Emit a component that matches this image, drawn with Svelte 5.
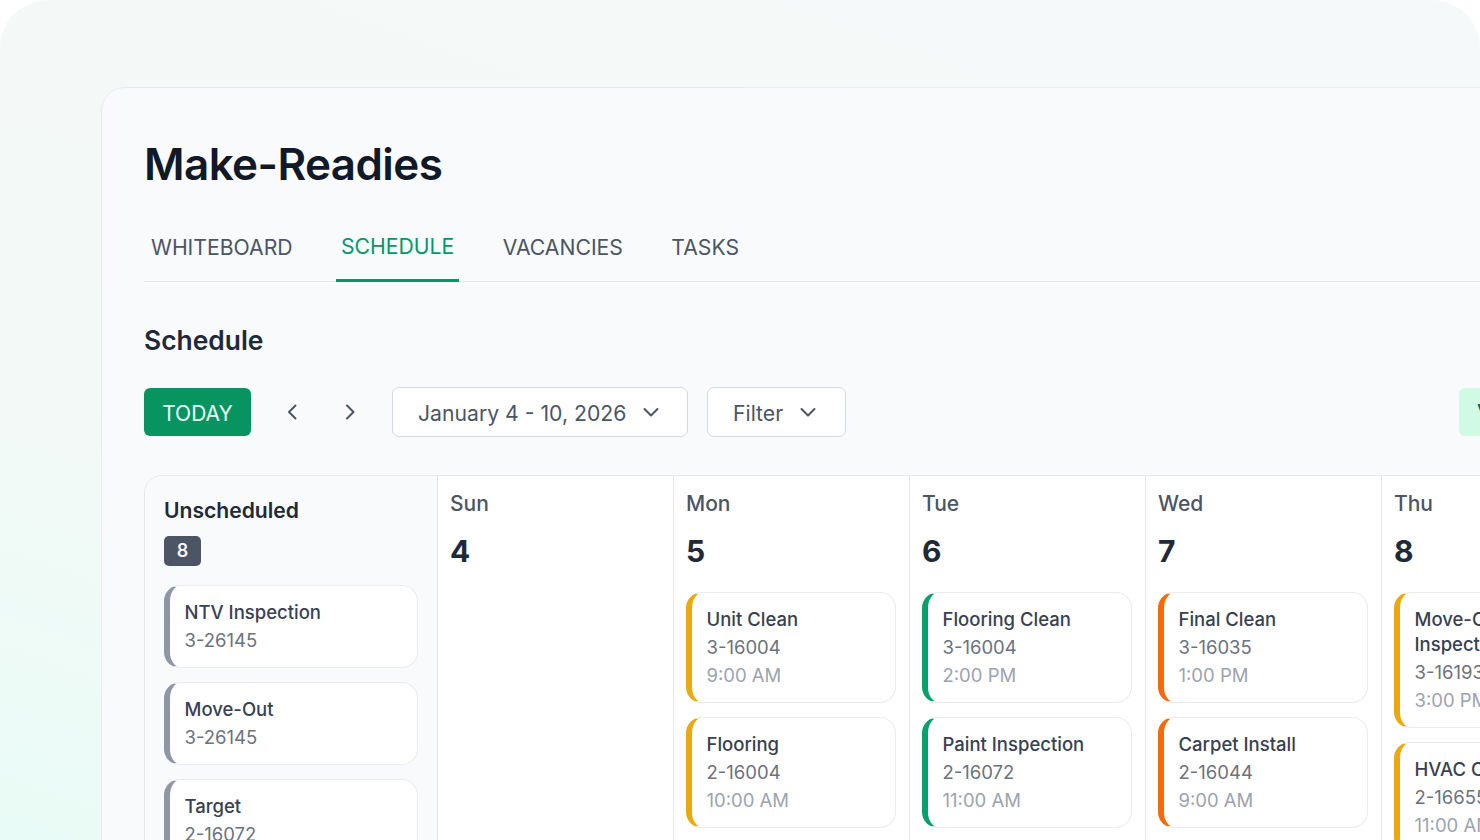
<script>
  const tabs = [
    { label: 'WHITEBOARD', active: false },
    { label: 'SCHEDULE', active: true },
    { label: 'VACANCIES', active: false },
    { label: 'TASKS', active: false }
  ];
  const unscheduled = [
    { title: 'NTV Inspection', unit: '3-26145' },
    { title: 'Move-Out', unit: '3-26145' },
    { title: 'Target', unit: '2-16072' }
  ];
  const days = [
    { name: 'Sun', num: 4, color: '', cards: [] },
    { name: 'Mon', num: 5, color: 'yellow', cards: [
      { title: 'Unit Clean', unit: '3-16004', time: '9:00 AM' },
      { title: 'Flooring', unit: '2-16004', time: '10:00 AM' }
    ] },
    { name: 'Tue', num: 6, color: 'green', cards: [
      { title: 'Flooring Clean', unit: '3-16004', time: '2:00 PM' },
      { title: 'Paint Inspection', unit: '2-16072', time: '11:00 AM' }
    ] },
    { name: 'Wed', num: 7, color: 'orange', cards: [
      { title: 'Final Clean', unit: '3-16035', time: '1:00 PM' },
      { title: 'Carpet Install', unit: '2-16044', time: '9:00 AM' }
    ] },
    { name: 'Thu', num: 8, color: 'yellow', cards: [
      { title: 'Move-Out Inspection', unit: '3-16193', time: '3:00 PM' },
      { title: 'HVAC Check', unit: '2-16655', time: '11:00 AM' }
    ] }
  ];
</script>

<div class="frame">
  <div class="panel">
    <h1>Make-Readies</h1>
    <div class="tabs">
      {#each tabs as t}
        <div class="tab" class:active={t.active}>{t.label}</div>
      {/each}
    </div>
    <h2>Schedule</h2>
    <div class="toolbar">
      <button class="today">TODAY</button>
      <button class="nav" aria-label="Previous">
        <svg width="20" height="20" viewBox="0 0 20 20"><path d="M13.5 3.5 7 10l6.5 6.5" /></svg>
      </button>
      <button class="nav" aria-label="Next">
        <svg width="20" height="20" viewBox="0 0 20 20"><path d="M7 3.5 13.5 10 7 16.5" /></svg>
      </button>
      <button class="select date">January 4 - 10, 2026
        <svg width="20" height="20" viewBox="0 0 20 20"><path d="M3.5 7 10 13.5 16.5 7" /></svg>
      </button>
      <button class="select filter">Filter
        <svg width="20" height="20" viewBox="0 0 20 20"><path d="M3.5 7 10 13.5 16.5 7" /></svg>
      </button>
      <div class="spacer"></div>
      <button class="view">View</button>
    </div>
    <div class="calendar">
      <div class="side">
        <div class="side-title">Unscheduled</div>
        <div class="badge">8</div>
        <div class="side-cards">
          {#each unscheduled as c}
            <div class="card grey">
              <div class="c-title">{c.title}</div>
              <div class="c-unit">{c.unit}</div>
            </div>
          {/each}
        </div>
      </div>
      {#each days as d}
        <div class="day">
          <div class="d-name">{d.name}</div>
          <div class="d-num">{d.num}</div>
          <div class="d-cards">
            {#each d.cards as c}
              <div class="card {d.color}">
                <div class="c-title">{c.title}</div>
                <div class="c-unit">{c.unit}</div>
                <div class="c-time">{c.time}</div>
              </div>
            {/each}
          </div>
        </div>
      {/each}
    </div>
  </div>
</div>

<style>
  :global(body) {
    margin: 0;
    background: #fff;
    font-family: Inter, "Liberation Sans", sans-serif;
  }
  .frame {
    width: 1480px;
    height: 840px;
    box-sizing: border-box;
    overflow: hidden;
    padding: 87px 0 0 101px;
    border-radius: 48px 48px 0 0;
    background: linear-gradient(20deg, #e9fbf6 0%, #f3f9f7 35%, #f6f9f9 100%);
  }
  .panel {
    width: 1700px;
    height: 900px;
    box-sizing: border-box;
    padding: 0 0 0 42px;
    background: #f8fafb;
    border: 1px solid #e7ebec;
    border-radius: 24px 0 0 0;
  }
  h1 {
    margin: 49px 0 0;
    font-size: 44px;
    line-height: 54px;
    font-weight: 600;
    letter-spacing: -0.6px;
    color: #111827;
  }
  .tabs {
    display: flex;
    margin-top: 25px;
    height: 66px;
    padding-left: 1px;
    box-sizing: border-box;
    border-bottom: 1px solid #e5e7eb;
  }
  .tab {
    padding: 0 6px;
    margin-right: 36.4px;
    font-size: 21.2px;
    line-height: 62px;
    color: #4b5563;
    font-weight: 400;
    height: 66px;
    box-sizing: border-box;
  }
  .tab.active {
    color: #059669;
    line-height: 60px;
    padding: 0 5px;
    margin-left: 1px;
    margin-right: 37.4px;
    border-bottom: 3px solid #059669;
    margin-bottom: -1px;
  }
  h2 {
    margin: 40px 0 0;
    font-size: 26.4px;
    line-height: 36px;
    font-weight: 600;
    color: #1f2937;
  }
  .toolbar {
    display: flex;
    align-items: center;
    margin-top: 29px;
    height: 50px;
    width: 1500px;
  }
  button {
    font-family: inherit;
    padding: 0;
    cursor: pointer;
    flex: none;
  }
  svg path {
    fill: none;
    stroke: #4b5563;
    stroke-width: 2;
    stroke-linecap: round;
    stroke-linejoin: round;
  }
  .today {
    width: 107px;
    height: 48px;
    border: 0;
    border-radius: 6px;
    padding-top: 2px;
    background: #089460;
    color: #ecfdf5;
    font-size: 21px;
  }
  .nav {
    width: 58px;
    height: 48px;
    border: 0;
    background: none;
    display: flex;
    align-items: center;
    justify-content: center;
  }
  .today + .nav { margin-left: 12px; }
  .select {
    height: 50px;
    background: #fff;
    border: 1px solid #d5d8de;
    border-radius: 7px;
    color: #4b5563;
    font-size: 21.2px;
    display: flex;
    align-items: center;
    gap: 15px;
    padding: 1px 0 0 25px;
    box-sizing: border-box;
  }
  .select svg { margin-top: -2px; }
  .date { width: 296px; margin-left: 13px; }
  .filter { width: 139px; margin-left: 19px; }
  .spacer { width: 613px; flex: none; }
  .view {
    width: 100px;
    height: 48px;
    border: 0;
    border-radius: 6px;
    padding-left: 18px;
    text-align: left;
    background: #d1fae5;
    color: #065f46;
    font-size: 21px;
  }
  .calendar {
    display: flex;
    margin-top: 38px;
    width: 1700px;
    height: 600px;
    background: #fff;
    border: 1px solid #e5e7eb;
    border-radius: 18px 0 0 0;
    overflow: hidden;
    box-sizing: border-box;
  }
  .side {
    width: 293px;
    flex: none;
    box-sizing: border-box;
    padding: 20px 19px 0 19px;
    background: #f8fafb;
    border-right: 1px solid #e5e7eb;
  }
  .side-title {
    font-size: 21.1px;
    line-height: 30px;
    font-weight: 600;
    color: #1f2937;
  }
  .badge {
    margin-top: 10px;
    width: 37px;
    height: 30px;
    border-radius: 5px;
    background: #4b5563;
    color: #f3f4f6;
    font-size: 18px;
    font-weight: 600;
    line-height: 30px;
    text-align: center;
  }
  .side-cards {
    display: flex;
    flex-direction: column;
    gap: 14px;
    margin-top: 19px;
  }
  .day {
    width: 236px;
    flex: none;
    box-sizing: border-box;
    padding: 13px 13px 0 12px;
    border-right: 1px solid #e5e7eb;
  }
  .d-name {
    font-size: 21px;
    line-height: 30px;
    font-weight: 500;
    color: #4b5563;
  }
  .d-num {
    margin-top: 14px;
    font-size: 30px;
    line-height: 36px;
    font-weight: 700;
    color: #1f2937;
  }
  .d-cards {
    display: flex;
    flex-direction: column;
    gap: 14px;
    margin-top: 23px;
  }
  .card {
    box-sizing: border-box;
    background: #fff;
    border: 1px solid #e9ebef;
    border-left-width: 6px;
    border-radius: 16px;
    padding: 14px 14px 13px 14.5px;
  }
  .grey { border-left-color: #8f96a6; }
  .yellow { border-left-color: #eaa90e; }
  .green { border-left-color: #0aa06e; }
  .orange { border-left-color: #f56a0a; }
  .c-title {
    font-size: 18.5px;
    line-height: 25px;
    margin-bottom: 1px;
    font-weight: 500;
    color: #374151;
  }
  .c-unit {
    font-size: 18.5px;
    line-height: 28px;
    color: #6b7280;
  }
  .c-time {
    font-size: 18.5px;
    line-height: 28px;
    color: #9ca3af;
  }
</style>
